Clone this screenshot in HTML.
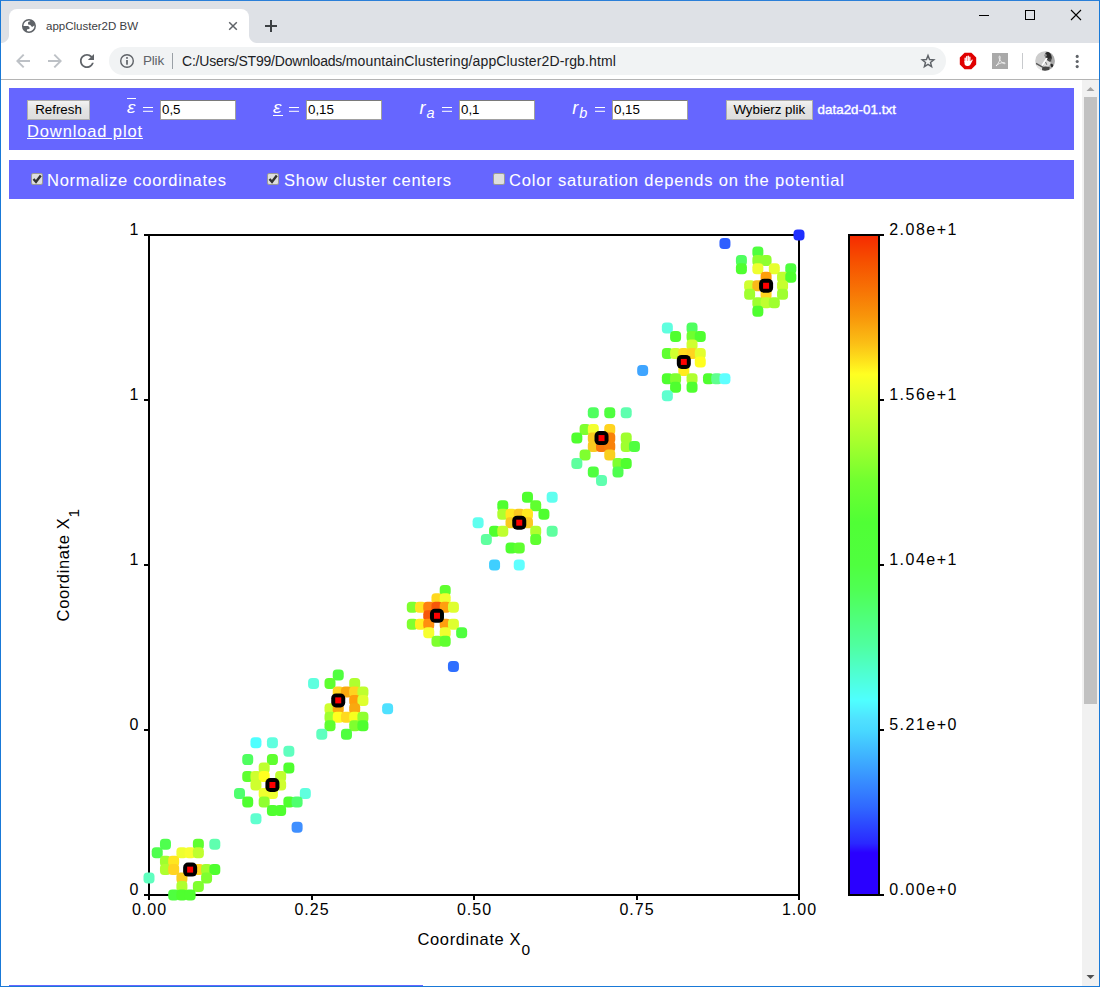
<!DOCTYPE html>
<html><head><meta charset="utf-8"><title>appCluster2D BW</title>
<style>
html,body{margin:0;padding:0;}
body{width:1100px;height:987px;position:relative;overflow:hidden;background:#fff;font-family:"Liberation Sans",sans-serif;}
.abs{position:absolute;}
#win{position:absolute;left:0;top:0;width:1098px;height:985px;border:1px solid #1979d7;border-top-color:#2a7fd8;}
#tabstrip{position:absolute;left:1px;top:1px;width:1098px;height:42px;background:#dee1e6;}
#tab{position:absolute;left:9px;top:9px;width:240px;height:34px;background:#fff;border-radius:8px 8px 0 0;}
#tab:before,#tab:after{content:"";position:absolute;bottom:0;width:8px;height:8px;}
#tab:before{left:-8px;background:radial-gradient(circle at 0 0,rgba(255,255,255,0) 7.5px,#fff 8.5px);}
#tab:after{right:-8px;background:radial-gradient(circle at 100% 0,rgba(255,255,255,0) 7.5px,#fff 8.5px);}
#tabtitle{position:absolute;left:46px;top:19px;font-size:11.5px;line-height:14px;color:#3c4043;letter-spacing:0px;white-space:nowrap;}
#toolbar{position:absolute;left:1px;top:43px;width:1098px;height:36px;background:#fff;border-bottom:1px solid #b4b4b4;}
#omni{position:absolute;left:109px;top:47px;width:837px;height:28px;border-radius:14px;background:#f1f3f4;}
#plik{position:absolute;left:143px;top:53px;font-size:13.5px;line-height:16px;color:#5f6368;letter-spacing:-0.2px;}
#sep{position:absolute;left:172px;top:53px;width:1px;height:16px;background:#9aa0a6;}
#url{position:absolute;left:182px;top:53px;font-size:14px;line-height:16px;color:#202124;white-space:nowrap;letter-spacing:0px;}
#sb{position:absolute;left:1082px;top:80px;width:17px;height:906px;background:#f1f1f1;}
#thumb{position:absolute;left:1084px;top:97px;width:13px;height:607px;background:#c1c1c1;}
.panel{position:absolute;left:9px;width:1065px;background:#6666ff;}
.lbl{-webkit-text-stroke:0.06px #fff;position:absolute;color:#fff;font-size:16.5px;line-height:20px;white-space:nowrap;letter-spacing:0.55px;}
.btn{position:absolute;box-sizing:border-box;height:20px;top:99.5px;background:linear-gradient(#f2f2f2,#e4e4e4 45%,#dddddd);border:1px solid #adadad;font-size:13.33px;line-height:18px;text-align:center;color:#000;white-space:nowrap;}
.inp{position:absolute;box-sizing:border-box;height:20px;top:99.5px;width:76px;background:#fff;border:1px solid #a0a0a0;border-top-color:#7a7a7a;font-size:13.33px;line-height:17px;padding-left:1px;color:#000;}
.math{position:absolute;color:#fff;font-size:18px;line-height:20px;font-style:italic;white-space:nowrap;}
.eq{position:absolute;color:#fff;font-size:18px;line-height:20px;white-space:nowrap;}
.cb{position:absolute;box-sizing:border-box;width:12px;height:12px;top:173px;border:1px solid #9a9a96;background:#dedede;border-radius:2px;}
.m{position:absolute;color:#fff;line-height:1;white-space:nowrap;}
.eqb{position:absolute;top:106.6px;width:10px;height:1.3px;background:#fff;box-shadow:0 3.8px 0 #fff;}
svg.chart{position:absolute;left:0;top:0;}
svg.icons{position:absolute;left:0;top:0;}
</style></head><body>
<div id="tabstrip"></div>
<div id="tab"></div>
<div id="tabtitle">appCluster2D BW</div>
<div id="toolbar"></div>
<div id="omni"></div>
<div id="plik">Plik</div><div id="sep"></div>
<div id="url"><span style="letter-spacing:-0.21px">C:/Users/ST99/Downloads/</span><span style="letter-spacing:0.12px">mountainClustering/appCluster2D-rgb.html</span></div>
<div id="sb"></div><div id="thumb"></div>

<div class="panel" style="top:88px;height:62px;"></div>
<div class="panel" style="top:160px;height:39px;"></div>
<div class="abs" style="left:9px;top:985px;width:414px;height:1px;background:#6666ff;"></div>

<div class="btn" style="left:27px;width:63px;">Refresh</div>
<div class="inp" style="left:160px;">0,5</div>
<div class="inp" style="left:306px;">0,15</div>
<div class="inp" style="left:459px;">0,1</div>
<div class="inp" style="left:612px;">0,15</div>
<div class="btn" style="left:726px;width:86.5px;">Wybierz plik</div>
<div class="abs" style="left:817.5px;top:101px;color:#fff;font-size:13.33px;line-height:17px;white-space:nowrap;-webkit-text-stroke:0.4px #fff;letter-spacing:0.05px;">data2d-01.txt</div>
<div class="lbl" style="left:27px;top:121px;text-decoration:underline;letter-spacing:0.875px;">Download plot</div>
<div class="lbl" style="left:47px;top:170px;letter-spacing:0.74px;">Normalize coordinates</div>
<div class="lbl" style="left:284px;top:170px;letter-spacing:0.73px;">Show cluster centers</div>
<div class="lbl" style="left:509px;top:170px;letter-spacing:0.83px;">Color saturation depends on the potential</div>
<div class="cb" style="left:31px;"></div>
<div class="cb" style="left:267px;"></div>
<div class="cb" style="left:493px;"></div>


<div class="m" style="left:127px;top:99.3px;font-size:17px;font-style:italic;transform:scaleX(1.15);transform-origin:0 0;">&#949;</div>
<div class="abs" style="left:127px;top:98px;width:9px;height:1px;background:#fff;"></div>
<div class="m" style="left:273.4px;top:99.3px;font-size:17px;font-style:italic;transform:scaleX(1.15);transform-origin:0 0;">&#949;</div>
<div class="abs" style="left:273px;top:115px;width:9.5px;height:1px;background:#fff;"></div>
<div class="m" style="left:419.4px;top:98.6px;font-size:18px;font-style:italic;">r</div>
<div class="m" style="left:426.6px;top:105.5px;font-size:14.5px;font-style:italic;">a</div>
<div class="m" style="left:572.3px;top:98.6px;font-size:18px;font-style:italic;">r</div>
<div class="m" style="left:579.3px;top:105.5px;font-size:14.5px;font-style:italic;">b</div>
<div class="eqb" style="left:143px;"></div>
<div class="eqb" style="left:289px;"></div>
<div class="eqb" style="left:441.7px;"></div>
<div class="eqb" style="left:595px;"></div>
<svg class="icons" width="1100" height="987" viewBox="0 0 1100 987">
<!-- globe favicon -->
<g transform="translate(28.95,25.95)">
<clipPath id="gc"><circle cx="0" cy="0" r="6.2"/></clipPath>
<circle cx="0" cy="0" r="6.25" fill="#fff" stroke="#5f6368" stroke-width="1.5"/>
<g clip-path="url(#gc)" fill="#5f6368">
<path d="M-0.300 -4.100 Q-1 -3.600 -0.900 -2.800 L-0.900 -2 Q-0.800 -1.300 0 -1.300 L0.900 -1.200 Q1.500 -1.100 1.800 -0.400 Q2.200 0.300 3 0.700 Q3.700 0.900 4.300 0.200 L5.200 -0.500 L7 -0.500 L7 -7 L1 -7 L1.300 -4.800 Z"/>
<path d="M-7 0.150 L-1.300 0.150 Q0.300 0.400 0.650 1.800 Q0.750 2.900 0.100 3.050 L-1.500 3.200 Q-2 3.300 -2 3.900 L-2.100 5.200 L-2.100 7 L-7 7 Z"/>
</g>
</g>
<!-- tab close -->
<path d="M229.2 22.2L236.800 29.800M236.800 22.200L229.200 29.800" stroke="#5f6368" stroke-width="1.5" fill="none"/>
<!-- new tab plus -->
<path d="M271 20V32M265 26H277" stroke="#3c4043" stroke-width="2" fill="none"/>
<!-- window controls -->
<g stroke="#000" stroke-width="1" fill="none" shape-rendering="crispEdges">
<path d="M979 15.5H989"/>
<rect x="1025.5" y="10.5" width="9" height="9"/>
</g>
<path d="M1071 10L1081 20M1081 10L1071 20" stroke="#000" stroke-width="1.1" fill="none"/>
<!-- back -->
<path d="M30 60.1H19.6L24.4 55.3L23 54L16 61L23 68L24.4 66.7L19.6 61.9H30Z" fill="#bdc1c6"/>
<!-- forward -->
<path d="M48 60.1H58.4L53.6 55.3L55 54L62 61L55 68L53.6 66.7L58.4 61.9H48Z" fill="#bdc1c6"/>
<!-- reload -->
<g transform="translate(75,49)">
<path d="M17.65 6.35C16.2 4.9 14.21 4 12 4c-4.42 0-7.99 3.58-7.99 8s3.57 8 7.990 8c3.730 0 6.840-2.550 7.730-6h-2.080c-.82 2.330-3.040 4-5.650 4-3.310 0-6-2.690-6-6s2.690-6 6-6c1.660 0 3.140.69 4.220 1.780L13 11h7V4l-2.350 2.350z" fill="#5f6368" transform="scale(0.88) translate(1.6,1.6)"/>
</g>
<!-- info -->
<circle cx="127" cy="61" r="6.3" fill="none" stroke="#5f6368" stroke-width="1.4"/>
<rect x="126.150" y="60" width="1.700" height="4.700" fill="#5f6368"/>
<rect x="126.150" y="57.100" width="1.700" height="1.700" fill="#5f6368"/>
<!-- star -->
<path d="M928.00 55.60L929.56 59.56L933.80 59.81L930.52 62.52L931.59 66.64L928.00 64.35L924.41 66.64L925.48 62.52L922.20 59.81L926.44 59.56Z" fill="none" stroke="#5f6368" stroke-width="1.45" stroke-linejoin="miter"/>
<!-- adblock -->
<g transform="translate(968,61)">
<path d="M-3.4 -8.2H3.4L8.2 -3.4V3.400L3.4 8.2H-3.4L-8.2 3.4V-3.400Z" fill="#e00000"/>
<g fill="#fff">
<rect x="-3.5" y="-3.6" width="1.35" height="5" rx="0.67"/>
<rect x="-1.95" y="-5.0" width="1.35" height="6" rx="0.67"/>
<rect x="-0.4" y="-5.4" width="1.35" height="6" rx="0.67"/>
<rect x="1.15" y="-4.6" width="1.35" height="6" rx="0.67"/>
<path d="M-3.5 0H2.5V0.600L3.6 -1.1C4.1 -1.8 5 -1.2 4.6 -0.5L2.6 3.3C2.100 4.400 1.300 5 0.200 5H-0.900C-2.400 5 -3.500 4 -3.500 2.600Z"/>
</g>
</g>
<!-- pdf -->
<rect x="992" y="53" width="16" height="16" fill="#a9a9a9"/>
<path d="M996 66 C998.5 63.5 1000.3 60 1000.2 57 C1000.2 55.6 998.9 55.8 999 57.2 C999.2 60 1001.5 62.8 1004.2 63.6 C1005.6 64 1005.4 62.6 1004 62.6 C1001 62.6 998 63.8 996 66Z" fill="none" stroke="#fff" stroke-width="0.8" opacity="0.9"/>
<!-- separator -->
<rect x="1022" y="53" width="1" height="16" fill="#c8cacd"/>
<!-- avatar -->
<defs>
<clipPath id="avc"><circle cx="0" cy="0" r="9.8"/></clipPath>
<filter id="avb" x="-20%" y="-20%" width="140%" height="140%"><feGaussianBlur stdDeviation="0.45"/></filter>
</defs>
<g transform="translate(1045,60.95)">
<circle cx="0" cy="0" r="9.8" fill="#cdcdcd"/>
<g clip-path="url(#avc)"><g filter="url(#avb)">
<path d="M0.500 -10 L10 -10 L10 10 L-3 10 L-2.500 5 L1.500 -2 Z" fill="#a9a9a9"/>
<path d="M-10 3 L-2.500 6.500 L-3 10 L-10 10 Z" fill="#e2e2e2"/>
<path d="M-9 2.400 L-2.400 6.200" stroke="#585858" stroke-width="1.300" fill="none"/>
<path d="M2 -1.500 L5.500 0.500 L5 4 L2.500 6 L-1.500 5.500 L-0.500 2 Z" fill="#dedede"/>
<ellipse cx="3.400" cy="-4.600" rx="3.100" ry="4.500" fill="#2c2c2c" transform="rotate(-18 3.400 -4.600)"/>
<path d="M2.500 -1.500 L6 -3 L6.300 0.500 L4 0.800 Z" fill="#4a4a4a"/>
<ellipse cx="0.500" cy="-5.600" rx="1.200" ry="1.500" fill="#8e8e8e"/>
<path d="M1.700 -2.400 L-2.500 4" stroke="#ffffff" stroke-width="1.700" fill="none" stroke-linecap="round"/>
<path d="M-2.800 6.200 Q1 5 4.800 6.400 L4 10 L-3 10 Z" fill="#454545"/>
<ellipse cx="6.900" cy="4.600" rx="1.300" ry="1.900" fill="#2a2a2a" transform="rotate(-25 6.900 4.600)"/>
<path d="M0.500 1 L1.800 3.800" stroke="#6a6a6a" stroke-width="1" fill="none"/>
</g></g>
</g>
<!-- menu -->
<circle cx="1077.2" cy="56.4" r="1.55" fill="#5f6368"/><circle cx="1077.2" cy="61.5" r="1.55" fill="#5f6368"/><circle cx="1077.2" cy="66.6" r="1.55" fill="#5f6368"/>
<!-- scrollbar arrows -->
<path d="M1086.5 91L1090.5 87L1094.5 91Z" fill="#a3a3a3"/>
<path d="M1086.5 975L1090.5 979L1094.5 975Z" fill="#505050"/>
<!-- checkmarks -->
<path d="M33.5 179L36 181.8L40.8 175.6" stroke="#333" stroke-width="2.4" fill="none"/>
<path d="M269.500 179L272 181.800L276.800 175.600" stroke="#333" stroke-width="2.4" fill="none"/>
</svg>

<svg class="chart" width="1100" height="987" viewBox="0 0 1100 987">
<defs><linearGradient id="cb" x1="0" y1="0" x2="0" y2="1">
<stop offset="0.000" stop-color="#f62a00"/>
<stop offset="0.040" stop-color="#f65000"/>
<stop offset="0.082" stop-color="#f77205"/>
<stop offset="0.123" stop-color="#f8950a"/>
<stop offset="0.165" stop-color="#fbc016"/>
<stop offset="0.192" stop-color="#fee41c"/>
<stop offset="0.211" stop-color="#ffff22"/>
<stop offset="0.233" stop-color="#ecff28"/>
<stop offset="0.250" stop-color="#dcff2a"/>
<stop offset="0.312" stop-color="#a8ff2d"/>
<stop offset="0.373" stop-color="#70ff30"/>
<stop offset="0.435" stop-color="#50ff35"/>
<stop offset="0.500" stop-color="#4fff3f"/>
<stop offset="0.539" stop-color="#4fff55"/>
<stop offset="0.580" stop-color="#4fff7a"/>
<stop offset="0.622" stop-color="#4fffa0"/>
<stop offset="0.663" stop-color="#4fffd0"/>
<stop offset="0.705" stop-color="#4fffff"/>
<stop offset="0.735" stop-color="#4fe0ff"/>
<stop offset="0.751" stop-color="#48d8ff"/>
<stop offset="0.784" stop-color="#40b8ff"/>
<stop offset="0.825" stop-color="#3890ff"/>
<stop offset="0.867" stop-color="#3068ff"/>
<stop offset="0.894" stop-color="#2c48ff"/>
<stop offset="0.922" stop-color="#2a28ff"/>
<stop offset="0.936" stop-color="#2a00ff"/>
<stop offset="1.000" stop-color="#2a00ff"/>
</linearGradient></defs>
<g stroke="#000" stroke-width="2" fill="none" shape-rendering="crispEdges">
<path d="M144 235H799V895H144M149 235V900"/>
<path d="M311.5 895V900"/>
<path d="M474.0 895V900"/>
<path d="M636.5 895V900"/>
<path d="M799.0 895V900"/>
<path d="M144 400.0H149"/>
<path d="M144 565.0H149"/>
<path d="M144 730.0H149"/>
</g>
<rect x="159.96" y="838.73" width="11.0" height="11.0" rx="4.0" fill="#4fff4f"/>
<rect x="192.87" y="838.73" width="11.0" height="11.0" rx="4.0" fill="#5fff2f"/>
<rect x="209.32" y="838.73" width="11.0" height="11.0" rx="4.0" fill="#5fffaf"/>
<rect x="151.73" y="847.19" width="11.0" height="11.0" rx="4.0" fill="#4fff4f"/>
<rect x="176.41" y="847.19" width="11.0" height="11.0" rx="4.0" fill="#efff2f"/>
<rect x="184.64" y="847.19" width="11.0" height="11.0" rx="4.0" fill="#f7ff2f"/>
<rect x="192.87" y="847.19" width="11.0" height="11.0" rx="4.0" fill="#bfff2f"/>
<rect x="159.96" y="855.65" width="11.0" height="11.0" rx="4.0" fill="#9fff2f"/>
<rect x="168.18" y="855.65" width="11.0" height="11.0" rx="4.0" fill="#ffe61f"/>
<rect x="159.96" y="864.12" width="11.0" height="11.0" rx="4.0" fill="#afff2f"/>
<rect x="168.18" y="864.12" width="11.0" height="11.0" rx="4.0" fill="#ffd41f"/>
<rect x="192.87" y="864.12" width="11.0" height="11.0" rx="4.0" fill="#ffd41f"/>
<rect x="201.09" y="864.12" width="11.0" height="11.0" rx="4.0" fill="#9fff2f"/>
<rect x="209.32" y="864.12" width="11.0" height="11.0" rx="4.0" fill="#4fff2f"/>
<rect x="143.50" y="872.58" width="11.0" height="11.0" rx="4.0" fill="#5fffbf"/>
<rect x="176.41" y="872.58" width="11.0" height="11.0" rx="4.0" fill="#f9cf1f"/>
<rect x="201.09" y="872.58" width="11.0" height="11.0" rx="4.0" fill="#7fff2f"/>
<rect x="176.41" y="881.04" width="11.0" height="11.0" rx="4.0" fill="#afff2f"/>
<rect x="192.87" y="881.04" width="11.0" height="11.0" rx="4.0" fill="#7fff2f"/>
<rect x="168.18" y="889.50" width="11.0" height="11.0" rx="4.0" fill="#4fff3f"/>
<rect x="176.41" y="889.50" width="11.0" height="11.0" rx="4.0" fill="#4fff2f"/>
<rect x="184.64" y="889.50" width="11.0" height="11.0" rx="4.0" fill="#4fff2f"/>
<rect x="250.46" y="737.19" width="11.0" height="11.0" rx="4.0" fill="#4fffff"/>
<rect x="266.92" y="737.19" width="11.0" height="11.0" rx="4.0" fill="#5fffdf"/>
<rect x="283.37" y="745.65" width="11.0" height="11.0" rx="4.0" fill="#5fffbf"/>
<rect x="242.23" y="754.12" width="11.0" height="11.0" rx="4.0" fill="#4fff5f"/>
<rect x="266.92" y="754.12" width="11.0" height="11.0" rx="4.0" fill="#5fff2f"/>
<rect x="258.69" y="762.58" width="11.0" height="11.0" rx="4.0" fill="#bfff2f"/>
<rect x="283.37" y="762.58" width="11.0" height="11.0" rx="4.0" fill="#4fff2f"/>
<rect x="242.23" y="771.04" width="11.0" height="11.0" rx="4.0" fill="#5fff2f"/>
<rect x="250.46" y="771.04" width="11.0" height="11.0" rx="4.0" fill="#cfff2f"/>
<rect x="258.69" y="771.04" width="11.0" height="11.0" rx="4.0" fill="#ffff1f"/>
<rect x="275.15" y="771.04" width="11.0" height="11.0" rx="4.0" fill="#bfff2f"/>
<rect x="250.46" y="779.50" width="11.0" height="11.0" rx="4.0" fill="#cfff2f"/>
<rect x="275.15" y="779.50" width="11.0" height="11.0" rx="4.0" fill="#cfff2f"/>
<rect x="234.01" y="787.96" width="11.0" height="11.0" rx="4.0" fill="#4fff6f"/>
<rect x="258.69" y="787.96" width="11.0" height="11.0" rx="4.0" fill="#efff2f"/>
<rect x="266.92" y="787.96" width="11.0" height="11.0" rx="4.0" fill="#efff2f"/>
<rect x="299.83" y="787.96" width="11.0" height="11.0" rx="4.0" fill="#5fffdf"/>
<rect x="242.23" y="796.42" width="11.0" height="11.0" rx="4.0" fill="#4fff2f"/>
<rect x="258.69" y="796.42" width="11.0" height="11.0" rx="4.0" fill="#8fff2f"/>
<rect x="283.37" y="796.42" width="11.0" height="11.0" rx="4.0" fill="#4fff2f"/>
<rect x="291.60" y="796.42" width="11.0" height="11.0" rx="4.0" fill="#4fff6f"/>
<rect x="266.92" y="804.88" width="11.0" height="11.0" rx="4.0" fill="#4fff2f"/>
<rect x="275.15" y="804.88" width="11.0" height="11.0" rx="4.0" fill="#4fff2f"/>
<rect x="250.46" y="813.35" width="11.0" height="11.0" rx="4.0" fill="#5fffcf"/>
<rect x="291.60" y="821.81" width="11.0" height="11.0" rx="4.0" fill="#3f8fff"/>
<rect x="332.74" y="669.50" width="11.0" height="11.0" rx="4.0" fill="#4fff3f"/>
<rect x="308.06" y="677.96" width="11.0" height="11.0" rx="4.0" fill="#5fffdf"/>
<rect x="324.51" y="677.96" width="11.0" height="11.0" rx="4.0" fill="#5fff2f"/>
<rect x="349.20" y="677.96" width="11.0" height="11.0" rx="4.0" fill="#afff2f"/>
<rect x="332.74" y="686.42" width="11.0" height="11.0" rx="4.0" fill="#ffd41f"/>
<rect x="340.97" y="686.42" width="11.0" height="11.0" rx="4.0" fill="#f9a90f"/>
<rect x="349.20" y="686.42" width="11.0" height="11.0" rx="4.0" fill="#ffd41f"/>
<rect x="357.42" y="686.42" width="11.0" height="11.0" rx="4.0" fill="#bfff2f"/>
<rect x="349.20" y="694.88" width="11.0" height="11.0" rx="4.0" fill="#ff9f0a"/>
<rect x="357.42" y="694.88" width="11.0" height="11.0" rx="4.0" fill="#dfff2f"/>
<rect x="324.51" y="703.35" width="11.0" height="11.0" rx="4.0" fill="#cfff2f"/>
<rect x="332.74" y="703.35" width="11.0" height="11.0" rx="4.0" fill="#f9a90f"/>
<rect x="349.20" y="703.35" width="11.0" height="11.0" rx="4.0" fill="#f9a90f"/>
<rect x="382.11" y="703.35" width="11.0" height="11.0" rx="4.0" fill="#4fe1ff"/>
<rect x="324.51" y="711.81" width="11.0" height="11.0" rx="4.0" fill="#9fff2f"/>
<rect x="332.74" y="711.81" width="11.0" height="11.0" rx="4.0" fill="#ffff1f"/>
<rect x="340.97" y="711.81" width="11.0" height="11.0" rx="4.0" fill="#ffd91f"/>
<rect x="349.20" y="711.81" width="11.0" height="11.0" rx="4.0" fill="#f7ff1f"/>
<rect x="357.42" y="711.81" width="11.0" height="11.0" rx="4.0" fill="#8fff2f"/>
<rect x="324.51" y="720.27" width="11.0" height="11.0" rx="4.0" fill="#5fff2f"/>
<rect x="349.20" y="720.27" width="11.0" height="11.0" rx="4.0" fill="#7fff2f"/>
<rect x="357.42" y="720.27" width="11.0" height="11.0" rx="4.0" fill="#4fff2f"/>
<rect x="316.28" y="728.73" width="11.0" height="11.0" rx="4.0" fill="#5fffbf"/>
<rect x="340.97" y="728.73" width="11.0" height="11.0" rx="4.0" fill="#4fff3f"/>
<rect x="439.70" y="584.88" width="11.0" height="11.0" rx="4.0" fill="#5fff2f"/>
<rect x="431.47" y="593.35" width="11.0" height="11.0" rx="4.0" fill="#ffd91f"/>
<rect x="439.70" y="593.35" width="11.0" height="11.0" rx="4.0" fill="#efff2f"/>
<rect x="406.79" y="601.81" width="11.0" height="11.0" rx="4.0" fill="#7fff2f"/>
<rect x="415.02" y="601.81" width="11.0" height="11.0" rx="4.0" fill="#ffe21f"/>
<rect x="423.25" y="601.81" width="11.0" height="11.0" rx="4.0" fill="#ff7f0f"/>
<rect x="431.47" y="601.81" width="11.0" height="11.0" rx="4.0" fill="#f7570a"/>
<rect x="439.70" y="601.81" width="11.0" height="11.0" rx="4.0" fill="#ff9f0f"/>
<rect x="447.93" y="601.81" width="11.0" height="11.0" rx="4.0" fill="#dfff2f"/>
<rect x="423.25" y="610.27" width="11.0" height="11.0" rx="4.0" fill="#f7570a"/>
<rect x="406.79" y="618.73" width="11.0" height="11.0" rx="4.0" fill="#7fff2f"/>
<rect x="415.02" y="618.73" width="11.0" height="11.0" rx="4.0" fill="#fff01f"/>
<rect x="423.25" y="618.73" width="11.0" height="11.0" rx="4.0" fill="#ff8f0f"/>
<rect x="439.70" y="618.73" width="11.0" height="11.0" rx="4.0" fill="#ff9f0f"/>
<rect x="447.93" y="618.73" width="11.0" height="11.0" rx="4.0" fill="#dfff2f"/>
<rect x="423.25" y="627.19" width="11.0" height="11.0" rx="4.0" fill="#f7ff2f"/>
<rect x="439.70" y="627.19" width="11.0" height="11.0" rx="4.0" fill="#efff2f"/>
<rect x="456.16" y="627.19" width="11.0" height="11.0" rx="4.0" fill="#4fff3f"/>
<rect x="431.47" y="635.65" width="11.0" height="11.0" rx="4.0" fill="#7fff2f"/>
<rect x="439.70" y="635.65" width="11.0" height="11.0" rx="4.0" fill="#5fff2f"/>
<rect x="447.93" y="661.04" width="11.0" height="11.0" rx="4.0" fill="#2f6fff"/>
<rect x="521.98" y="491.81" width="11.0" height="11.0" rx="4.0" fill="#4fff2f"/>
<rect x="546.66" y="491.81" width="11.0" height="11.0" rx="4.0" fill="#5fffef"/>
<rect x="497.30" y="500.27" width="11.0" height="11.0" rx="4.0" fill="#4fff2f"/>
<rect x="530.21" y="500.27" width="11.0" height="11.0" rx="4.0" fill="#5fff2f"/>
<rect x="497.30" y="508.73" width="11.0" height="11.0" rx="4.0" fill="#afff2f"/>
<rect x="505.53" y="508.73" width="11.0" height="11.0" rx="4.0" fill="#ffe81f"/>
<rect x="513.75" y="508.73" width="11.0" height="11.0" rx="4.0" fill="#f9c91f"/>
<rect x="521.98" y="508.73" width="11.0" height="11.0" rx="4.0" fill="#ffe81f"/>
<rect x="538.44" y="508.73" width="11.0" height="11.0" rx="4.0" fill="#4fff2f"/>
<rect x="472.61" y="517.19" width="11.0" height="11.0" rx="4.0" fill="#5fffef"/>
<rect x="505.53" y="517.19" width="11.0" height="11.0" rx="4.0" fill="#f9c91f"/>
<rect x="521.98" y="517.19" width="11.0" height="11.0" rx="4.0" fill="#f9c91f"/>
<rect x="489.07" y="525.65" width="11.0" height="11.0" rx="4.0" fill="#4fff2f"/>
<rect x="497.30" y="525.65" width="11.0" height="11.0" rx="4.0" fill="#bfff2f"/>
<rect x="530.21" y="525.65" width="11.0" height="11.0" rx="4.0" fill="#afff2f"/>
<rect x="546.66" y="525.65" width="11.0" height="11.0" rx="4.0" fill="#5fff9f"/>
<rect x="480.84" y="534.12" width="11.0" height="11.0" rx="4.0" fill="#5fff9f"/>
<rect x="530.21" y="534.12" width="11.0" height="11.0" rx="4.0" fill="#5fff2f"/>
<rect x="505.53" y="542.58" width="11.0" height="11.0" rx="4.0" fill="#4fff2f"/>
<rect x="513.75" y="542.58" width="11.0" height="11.0" rx="4.0" fill="#5fff2f"/>
<rect x="489.07" y="559.50" width="11.0" height="11.0" rx="4.0" fill="#3fcfff"/>
<rect x="513.75" y="559.50" width="11.0" height="11.0" rx="4.0" fill="#5fffff"/>
<rect x="587.80" y="407.19" width="11.0" height="11.0" rx="4.0" fill="#4fff5f"/>
<rect x="604.26" y="407.19" width="11.0" height="11.0" rx="4.0" fill="#4fff3f"/>
<rect x="620.72" y="407.19" width="11.0" height="11.0" rx="4.0" fill="#5fffaf"/>
<rect x="579.58" y="424.12" width="11.0" height="11.0" rx="4.0" fill="#7fff2f"/>
<rect x="587.80" y="424.12" width="11.0" height="11.0" rx="4.0" fill="#f3ff2f"/>
<rect x="604.26" y="424.12" width="11.0" height="11.0" rx="4.0" fill="#ffd41f"/>
<rect x="571.35" y="432.58" width="11.0" height="11.0" rx="4.0" fill="#4fff2f"/>
<rect x="587.80" y="432.58" width="11.0" height="11.0" rx="4.0" fill="#f9c91f"/>
<rect x="604.26" y="432.58" width="11.0" height="11.0" rx="4.0" fill="#f9810a"/>
<rect x="620.72" y="432.58" width="11.0" height="11.0" rx="4.0" fill="#9fff2f"/>
<rect x="587.80" y="441.04" width="11.0" height="11.0" rx="4.0" fill="#f9c91f"/>
<rect x="596.03" y="441.04" width="11.0" height="11.0" rx="4.0" fill="#f9770a"/>
<rect x="604.26" y="441.04" width="11.0" height="11.0" rx="4.0" fill="#f9810a"/>
<rect x="620.72" y="441.04" width="11.0" height="11.0" rx="4.0" fill="#9fff2f"/>
<rect x="628.94" y="441.04" width="11.0" height="11.0" rx="4.0" fill="#4fff3f"/>
<rect x="579.58" y="449.50" width="11.0" height="11.0" rx="4.0" fill="#7fff2f"/>
<rect x="604.26" y="449.50" width="11.0" height="11.0" rx="4.0" fill="#f9cf1f"/>
<rect x="571.35" y="457.96" width="11.0" height="11.0" rx="4.0" fill="#5fff9f"/>
<rect x="612.49" y="457.96" width="11.0" height="11.0" rx="4.0" fill="#7fff2f"/>
<rect x="620.72" y="457.96" width="11.0" height="11.0" rx="4.0" fill="#4fff2f"/>
<rect x="587.80" y="466.42" width="11.0" height="11.0" rx="4.0" fill="#4fff3f"/>
<rect x="612.49" y="466.42" width="11.0" height="11.0" rx="4.0" fill="#4fff4f"/>
<rect x="596.03" y="474.88" width="11.0" height="11.0" rx="4.0" fill="#5fffaf"/>
<rect x="661.85" y="322.58" width="11.0" height="11.0" rx="4.0" fill="#5fffdf"/>
<rect x="686.54" y="322.58" width="11.0" height="11.0" rx="4.0" fill="#4fff5f"/>
<rect x="670.08" y="331.04" width="11.0" height="11.0" rx="4.0" fill="#4fff2f"/>
<rect x="686.54" y="331.04" width="11.0" height="11.0" rx="4.0" fill="#6fff2f"/>
<rect x="694.77" y="331.04" width="11.0" height="11.0" rx="4.0" fill="#4fff2f"/>
<rect x="686.54" y="339.50" width="11.0" height="11.0" rx="4.0" fill="#cfff2f"/>
<rect x="661.85" y="347.96" width="11.0" height="11.0" rx="4.0" fill="#5fff2f"/>
<rect x="670.08" y="347.96" width="11.0" height="11.0" rx="4.0" fill="#cfff2f"/>
<rect x="678.31" y="347.96" width="11.0" height="11.0" rx="4.0" fill="#ffdc1f"/>
<rect x="686.54" y="347.96" width="11.0" height="11.0" rx="4.0" fill="#ffd41f"/>
<rect x="694.77" y="347.96" width="11.0" height="11.0" rx="4.0" fill="#e3ff2f"/>
<rect x="694.77" y="356.42" width="11.0" height="11.0" rx="4.0" fill="#ffff1f"/>
<rect x="637.17" y="364.88" width="11.0" height="11.0" rx="4.0" fill="#3fa5ff"/>
<rect x="678.31" y="364.88" width="11.0" height="11.0" rx="4.0" fill="#ffec1f"/>
<rect x="661.85" y="373.35" width="11.0" height="11.0" rx="4.0" fill="#4fff2f"/>
<rect x="670.08" y="373.35" width="11.0" height="11.0" rx="4.0" fill="#7fff2f"/>
<rect x="686.54" y="373.35" width="11.0" height="11.0" rx="4.0" fill="#afff2f"/>
<rect x="702.99" y="373.35" width="11.0" height="11.0" rx="4.0" fill="#4fff2f"/>
<rect x="711.22" y="373.35" width="11.0" height="11.0" rx="4.0" fill="#5fff8f"/>
<rect x="719.45" y="373.35" width="11.0" height="11.0" rx="4.0" fill="#5fffff"/>
<rect x="670.08" y="381.81" width="11.0" height="11.0" rx="4.0" fill="#4fff2f"/>
<rect x="686.54" y="381.81" width="11.0" height="11.0" rx="4.0" fill="#4fff2f"/>
<rect x="661.85" y="390.27" width="11.0" height="11.0" rx="4.0" fill="#5fffcf"/>
<rect x="793.50" y="229.50" width="11.0" height="11.0" rx="4.0" fill="#1f2fff"/>
<rect x="719.45" y="237.96" width="11.0" height="11.0" rx="4.0" fill="#2f5fff"/>
<rect x="752.36" y="246.42" width="11.0" height="11.0" rx="4.0" fill="#4fff3f"/>
<rect x="735.91" y="254.88" width="11.0" height="11.0" rx="4.0" fill="#4fff5f"/>
<rect x="752.36" y="254.88" width="11.0" height="11.0" rx="4.0" fill="#8fff2f"/>
<rect x="760.59" y="254.88" width="11.0" height="11.0" rx="4.0" fill="#8fff2f"/>
<rect x="735.91" y="263.35" width="11.0" height="11.0" rx="4.0" fill="#4fff2f"/>
<rect x="752.36" y="263.35" width="11.0" height="11.0" rx="4.0" fill="#efff2f"/>
<rect x="768.82" y="263.35" width="11.0" height="11.0" rx="4.0" fill="#e7ff2f"/>
<rect x="785.27" y="263.35" width="11.0" height="11.0" rx="4.0" fill="#4fff3f"/>
<rect x="760.59" y="271.81" width="11.0" height="11.0" rx="4.0" fill="#ff9f0a"/>
<rect x="777.04" y="271.81" width="11.0" height="11.0" rx="4.0" fill="#bfff2f"/>
<rect x="785.27" y="271.81" width="11.0" height="11.0" rx="4.0" fill="#4fff2f"/>
<rect x="744.13" y="280.27" width="11.0" height="11.0" rx="4.0" fill="#cfff2f"/>
<rect x="752.36" y="280.27" width="11.0" height="11.0" rx="4.0" fill="#f9b91a"/>
<rect x="777.04" y="280.27" width="11.0" height="11.0" rx="4.0" fill="#c7ff2f"/>
<rect x="744.13" y="288.73" width="11.0" height="11.0" rx="4.0" fill="#9fff2f"/>
<rect x="760.59" y="288.73" width="11.0" height="11.0" rx="4.0" fill="#ffd41f"/>
<rect x="777.04" y="288.73" width="11.0" height="11.0" rx="4.0" fill="#9fff2f"/>
<rect x="752.36" y="297.19" width="11.0" height="11.0" rx="4.0" fill="#9fff2f"/>
<rect x="760.59" y="297.19" width="11.0" height="11.0" rx="4.0" fill="#bfff2f"/>
<rect x="768.82" y="297.19" width="11.0" height="11.0" rx="4.0" fill="#9fff2f"/>
<rect x="752.36" y="305.65" width="11.0" height="11.0" rx="4.0" fill="#4fff2f"/>
<rect x="183.14" y="862.62" width="14" height="14" rx="4.8" fill="#000"/>
<rect x="187.14" y="866.62" width="6" height="6" fill="#ff0000"/>
<rect x="265.42" y="778.00" width="14" height="14" rx="4.8" fill="#000"/>
<rect x="269.42" y="782.00" width="6" height="6" fill="#ff0000"/>
<rect x="331.24" y="693.38" width="14" height="14" rx="4.8" fill="#000"/>
<rect x="335.24" y="697.38" width="6" height="6" fill="#ff0000"/>
<rect x="429.97" y="608.77" width="14" height="14" rx="4.8" fill="#000"/>
<rect x="433.97" y="612.77" width="6" height="6" fill="#ff0000"/>
<rect x="512.25" y="515.69" width="14" height="14" rx="4.8" fill="#000"/>
<rect x="516.25" y="519.69" width="6" height="6" fill="#ff0000"/>
<rect x="594.53" y="431.08" width="14" height="14" rx="4.8" fill="#000"/>
<rect x="598.53" y="435.08" width="6" height="6" fill="#ff0000"/>
<rect x="676.81" y="354.92" width="14" height="14" rx="4.8" fill="#000"/>
<rect x="680.81" y="358.92" width="6" height="6" fill="#ff0000"/>
<rect x="759.09" y="278.77" width="14" height="14" rx="4.8" fill="#000"/>
<rect x="763.09" y="282.77" width="6" height="6" fill="#ff0000"/>
<rect x="849" y="235" width="30" height="660" fill="url(#cb)"/>
<g stroke="#000" stroke-width="2" fill="none" shape-rendering="crispEdges">
<path d="M849 235V895M879 235V895M848 235H884M848 895H884"/>
<path d="M879 400.0H884"/>
<path d="M879 565.0H884"/>
<path d="M879 730.0H884"/>
</g>
<g font-family="Liberation Sans, sans-serif" font-size="16" fill="#000">
<text x="149.5" y="914.6" text-anchor="middle" letter-spacing="1.0">0.00</text>
<text x="312.0" y="914.6" text-anchor="middle" letter-spacing="1.0">0.25</text>
<text x="474.5" y="914.6" text-anchor="middle" letter-spacing="1.0">0.50</text>
<text x="637.0" y="914.6" text-anchor="middle" letter-spacing="1.0">0.75</text>
<text x="799.5" y="914.6" text-anchor="middle" letter-spacing="1.0">1.00</text>
<text x="138.5" y="234.6" text-anchor="end">1</text>
<text x="138.5" y="399.6" text-anchor="end">1</text>
<text x="138.5" y="564.6" text-anchor="end">1</text>
<text x="138.5" y="729.6" text-anchor="end">0</text>
<text x="138.5" y="894.6" text-anchor="end">0</text>
<text x="889.2" y="234.7" letter-spacing="1.5">2.08e+1</text>
<text x="889.2" y="399.7" letter-spacing="1.5">1.56e+1</text>
<text x="889.2" y="564.7" letter-spacing="1.5">1.04e+1</text>
<text x="889.2" y="729.7" letter-spacing="1.5">5.21e+0</text>
<text x="889.2" y="894.7" letter-spacing="1.5">0.00e+0</text>
</g>
<g font-family="Liberation Sans, sans-serif" font-size="16.5" fill="#000">
<text x="417.5" y="944.6" letter-spacing="0.62">Coordinate X</text>
<text x="521.5" y="954.6" font-size="15.5">0</text>
<g transform="translate(69.2,621.4) rotate(-90)"><text x="0" y="0" letter-spacing="0.62">Coordinate X</text><text x="104" y="10" font-size="15.5">1</text></g>
</g>
</svg>
<div id="win"></div>
</body></html>
